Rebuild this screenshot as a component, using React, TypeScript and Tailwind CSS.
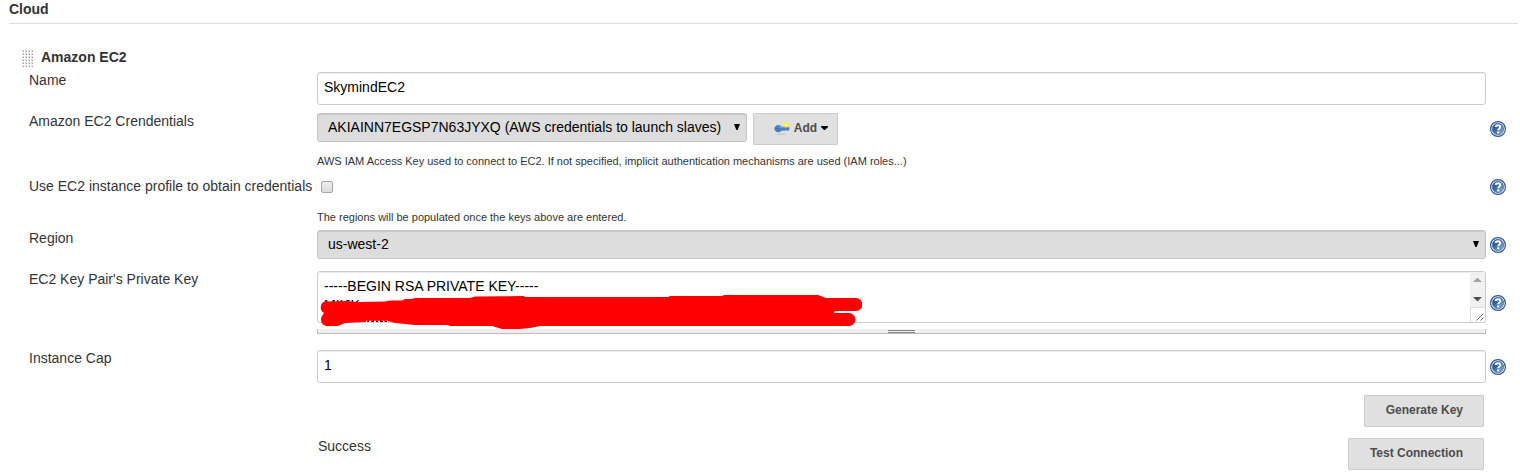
import React from "react";

const fieldClass =
  "block w-full rounded-[3px] border border-[#ccc] bg-white px-1.5 text-sm text-black shadow-[inset_0_1px_1px_rgba(0,0,0,0.075)] outline-none";

const buttonClass =
  "flex h-8 items-center justify-center rounded-[1px] border border-[#ccc] bg-[#e0e0e0] pb-0.5 pl-[21px] pr-5 text-xs font-bold text-[#4d4d4d]";

function HelpIcon() {
  return (
    <svg viewBox="0 0 16 16" className="block size-4" aria-hidden="true">
      <defs>
        <linearGradient id="help-fill" x1="0" y1="0" x2="1" y2="1">
          <stop offset="0" stopColor="#204a87" />
          <stop offset="0.4" stopColor="#3465a4" />
          <stop offset="1" stopColor="#9dbbe0" />
        </linearGradient>
      </defs>
      <circle cx="8" cy="8" r="7.4" fill="#fff" stroke="#2d5591" strokeWidth="1.2" />
      <circle cx="8" cy="8" r="5.7" fill="url(#help-fill)" stroke="#335c98" strokeWidth="0.6" />
      <path
        d="M5.7 6.1C5.7 4.7 6.7 4.200 8 4.200c1.400 0 2.300.7 2.300 1.800 0 1.500-2 1.600-2 3.300"
        fill="none"
        stroke="#fff"
        strokeWidth="2"
      />
      <rect x="7.200" y="10.400" width="2" height="2" fill="#fff" />
    </svg>
  );
}

function HelpButton({ topic }: { topic: string }) {
  return (
    <button type="button" aria-label={`Help for ${topic}`} className="block size-4 rounded-full">
      <HelpIcon />
    </button>
  );
}

type RowProps = {
  label: string;
  htmlFor: string;
  help?: boolean;
  className?: string;
  children: React.ReactNode;
};

function Row({ label, htmlFor, help = true, className = "", children }: RowProps) {
  return (
    <div className={`flex items-center ${className}`}>
      <label htmlFor={htmlFor} className="w-72 shrink-0 self-start whitespace-nowrap leading-4">
        {label}
      </label>
      <div className="min-w-0 flex-1">{children}</div>
      <div className="ml-1 w-4 shrink-0">{help && <HelpButton topic={label} />}</div>
    </div>
  );
}

function Select({ id, option }: { id: string; option: string }) {
  return (
    <div className="relative">
      <select
        id={id}
        className="block h-[29px] w-full appearance-none rounded-[3px] border border-[#c4c4c4] bg-[#ddd] pb-0.5 pl-2.5 pr-6 text-sm text-black shadow-[inset_0_1px_1px_rgba(0,0,0,0.1)] outline-none"
      >
        <option>{option}</option>
      </select>
      <svg viewBox="0 0 6 6" className="pointer-events-none absolute right-[7px] top-[11px] size-1.5" aria-hidden="true">
        <path d="M0 0h6L3.600 6H2.400z" fill="#000" />
      </svg>
    </div>
  );
}

function Hint({ className = "", children }: { className?: string; children: React.ReactNode }) {
  return <p className={`ml-72 text-[11px] leading-[14px] ${className}`}>{children}</p>;
}

function DragHandle() {
  return (
    <svg viewBox="0 0 12 18" className="h-[18px] w-3 shrink-0" aria-hidden="true">
      <defs>
        <pattern id="grip" width="3" height="3" patternUnits="userSpaceOnUse">
          <rect width="2" height="2" fill="#deded9" />
          <rect x="1" y="1" width="1" height="1" fill="#9a9a94" />
        </pattern>
      </defs>
      <rect width="12" height="18" fill="url(#grip)" />
    </svg>
  );
}

function KeyIcon() {
  return (
    <svg viewBox="0 0 16 16" className="size-4" aria-hidden="true">
      <ellipse cx="7.500" cy="14.200" rx="5.500" ry="0.8" fill="#c8c8c8" />
      <path
        d="M4.200 5.500c1.600 0 2.700.7 3.200 1.600h6.800l1 1.200-.8 2h-1.700l-.6-.8-.8.8H7.500c-.6 1-1.800 1.600-3.300 1.600-2 0-3.400-1.300-3.400-3.200s1.400-3.200 3.400-3.200z"
        fill="#4a7fc1"
        stroke="#4475b4"
        strokeWidth="0.7"
      />
      <circle cx="3.400" cy="8.700" r="0.8" fill="#3d5a84" />
      <path d="M4.500 6.800l2 .9h7" fill="none" stroke="#88b0df" strokeWidth="0.8" />
      <circle cx="12.300" cy="4.800" r="2.700" fill="#f5ed4a" />
      <circle cx="12.300" cy="4.800" r="1.100" fill="#fffcb5" />
    </svg>
  );
}

function Scrollbar() {
  return (
    <svg viewBox="0 0 15 50" className="h-[50px] w-[15px] shrink-0" aria-hidden="true">
      <rect width="15" height="35" fill="#f1f1f1" />
      <path d="M3 10h9L8 6H7z" fill="#a3a3a3" />
      <path d="M3 25h9L8 29H7z" fill="#505050" />
      <path d="M0 35.500h15M.5 35v15" stroke="#ddd" fill="none" />
      <path d="M6.500 48.500l7-7M10.500 48.500l3-3" stroke="#666" strokeWidth="1" />
    </svg>
  );
}

function Redaction() {
  return (
    <svg
      viewBox="320 295 542 34"
      className="pointer-events-none absolute left-[3px] top-6 h-[34px] w-[542px]"
      aria-hidden="true"
    >
      <path
        d="M326 301L330 301.500L345 301L358 302L385 301.500L390 300.500L402 300.500L405 299L412 299L415 298L470 298L475 296.500L523 296L526 297L668 297L670 296L722 296L724 295L818 295L826 298H856A6.500 6.500 0 0 1 856 311H835L834 313H849A6.500 6.500 0 0 1 849 326H540L530 328L520 329H502L492 326H450L448 325L415 325L395 323L390 321.500L362 322L345 323L338 326H327A6.500 6.500 0 0 1 322 316L324 313A6.500 6.500 0 0 1 326 301Z"
        fill="#f00"
      />
      <path d="M366 321.500h22" stroke="#fff" strokeWidth="1.500" strokeDasharray="2 1 3 2" />
      <path d="M367 321.500h20" stroke="#222" strokeWidth="1" strokeDasharray="2 2 3 2" />
    </svg>
  );
}

export default function App() {
  return (
    <main className="pb-1.5 font-['Liberation_Sans',Arial,sans-serif] text-sm text-[#333]">
      <h1 className="ml-[9px] mr-0.5 border-b border-[#ddd] pb-1.5 pt-px text-sm font-bold leading-4">Cloud</h1>

      <form onSubmit={(event) => event.preventDefault()}>
        <div className="mt-[26px] flex h-[18px] items-center gap-[7px] pl-[22px]">
          <DragHandle />
          <h2 className="pb-1 text-sm font-bold leading-4">Amazon EC2</h2>
        </div>

        <div className="mt-1 pl-[29px] pr-3.5">
          <Row label="Name" htmlFor="name" help={false}>
            <input id="name" defaultValue="SkymindEC2" className={`${fieldClass} h-[33px] pb-1`} />
          </Row>

          <Row label="Amazon EC2 Crendentials" htmlFor="credentials" className="mt-2">
            <div className="flex items-start gap-1.5">
              <div className="w-[430px]">
                <Select id="credentials" option="AKIAINN7EGSP7N63JYXQ (AWS credentials to launch slaves)" />
              </div>
              <button type="button" className={`${buttonClass} w-[85px]`}>
                <span className="flex items-center gap-1 pl-2.5">
                  <KeyIcon />
                  Add
                  <svg viewBox="0 0 7 4" className="h-1 w-[7px] shrink-0" aria-hidden="true">
                    <path d="M0 0h7v1L4 4H3L0 1z" fill="#000" />
                  </svg>
                </span>
              </button>
            </div>
          </Row>
          <Hint className="mt-[9px]">
            AWS IAM Access Key used to connect to EC2. If not specified, implicit authentication mechanisms are used
            (IAM roles...)
          </Hint>

          <Row label="Use EC2 instance profile to obtain credentials" htmlFor="profile" className="mt-2.5 h-[18px]">
            <input
              id="profile"
              type="checkbox"
              className="ml-1 block size-3 appearance-none rounded-xs border border-[#a6a6a6] bg-linear-to-b from-[#eee] to-[#dcdcdc] checked:bg-[#3465a4]"
            />
          </Row>

          <Hint className="mt-3.5">The regions will be populated once the keys above are entered.</Hint>
          <Row label="Region" htmlFor="region" className="mt-1.5">
            <Select id="region" option="us-west-2" />
          </Row>

          <Row label="EC2 Key Pair's Private Key" htmlFor="private-key" className="mt-3">
            <div className="relative">
              <div className="flex overflow-hidden rounded-[3px] border border-[#ccc] shadow-[inset_0_1px_1px_rgba(0,0,0,0.075)]">
                <textarea
                  id="private-key"
                  wrap="off"
                  defaultValue={"-----BEGIN RSA PRIVATE KEY-----\nMIIJK"}
                  className="block h-[50px] min-w-0 flex-1 resize-none overflow-hidden bg-transparent px-1.5 pt-[5px] text-sm leading-[19px] text-black outline-none"
                />
                <Scrollbar />
              </div>
              <div className="mt-1.5 flex h-[5px] justify-center border-x border-b border-[#bbb] bg-[#eee] pt-px">
                <div className="h-[3px] w-[27px] border-y border-[#888]" />
              </div>
              <Redaction />
            </div>
          </Row>

          <Row label="Instance Cap" htmlFor="instance-cap" className="mt-4">
            <input id="instance-cap" defaultValue="1" className={`${fieldClass} h-[33px] pb-1`} />
          </Row>
        </div>

        <div className="mt-3 flex justify-end pr-9">
          <button type="button" className={buttonClass}>
            Generate Key
          </button>
        </div>
        <div className="mt-[11px] flex items-start justify-between pl-[318px] pr-9">
          <output className="leading-4">Success</output>
          <button type="button" className={buttonClass}>
            Test Connection
          </button>
        </div>
      </form>
    </main>
  );
}
